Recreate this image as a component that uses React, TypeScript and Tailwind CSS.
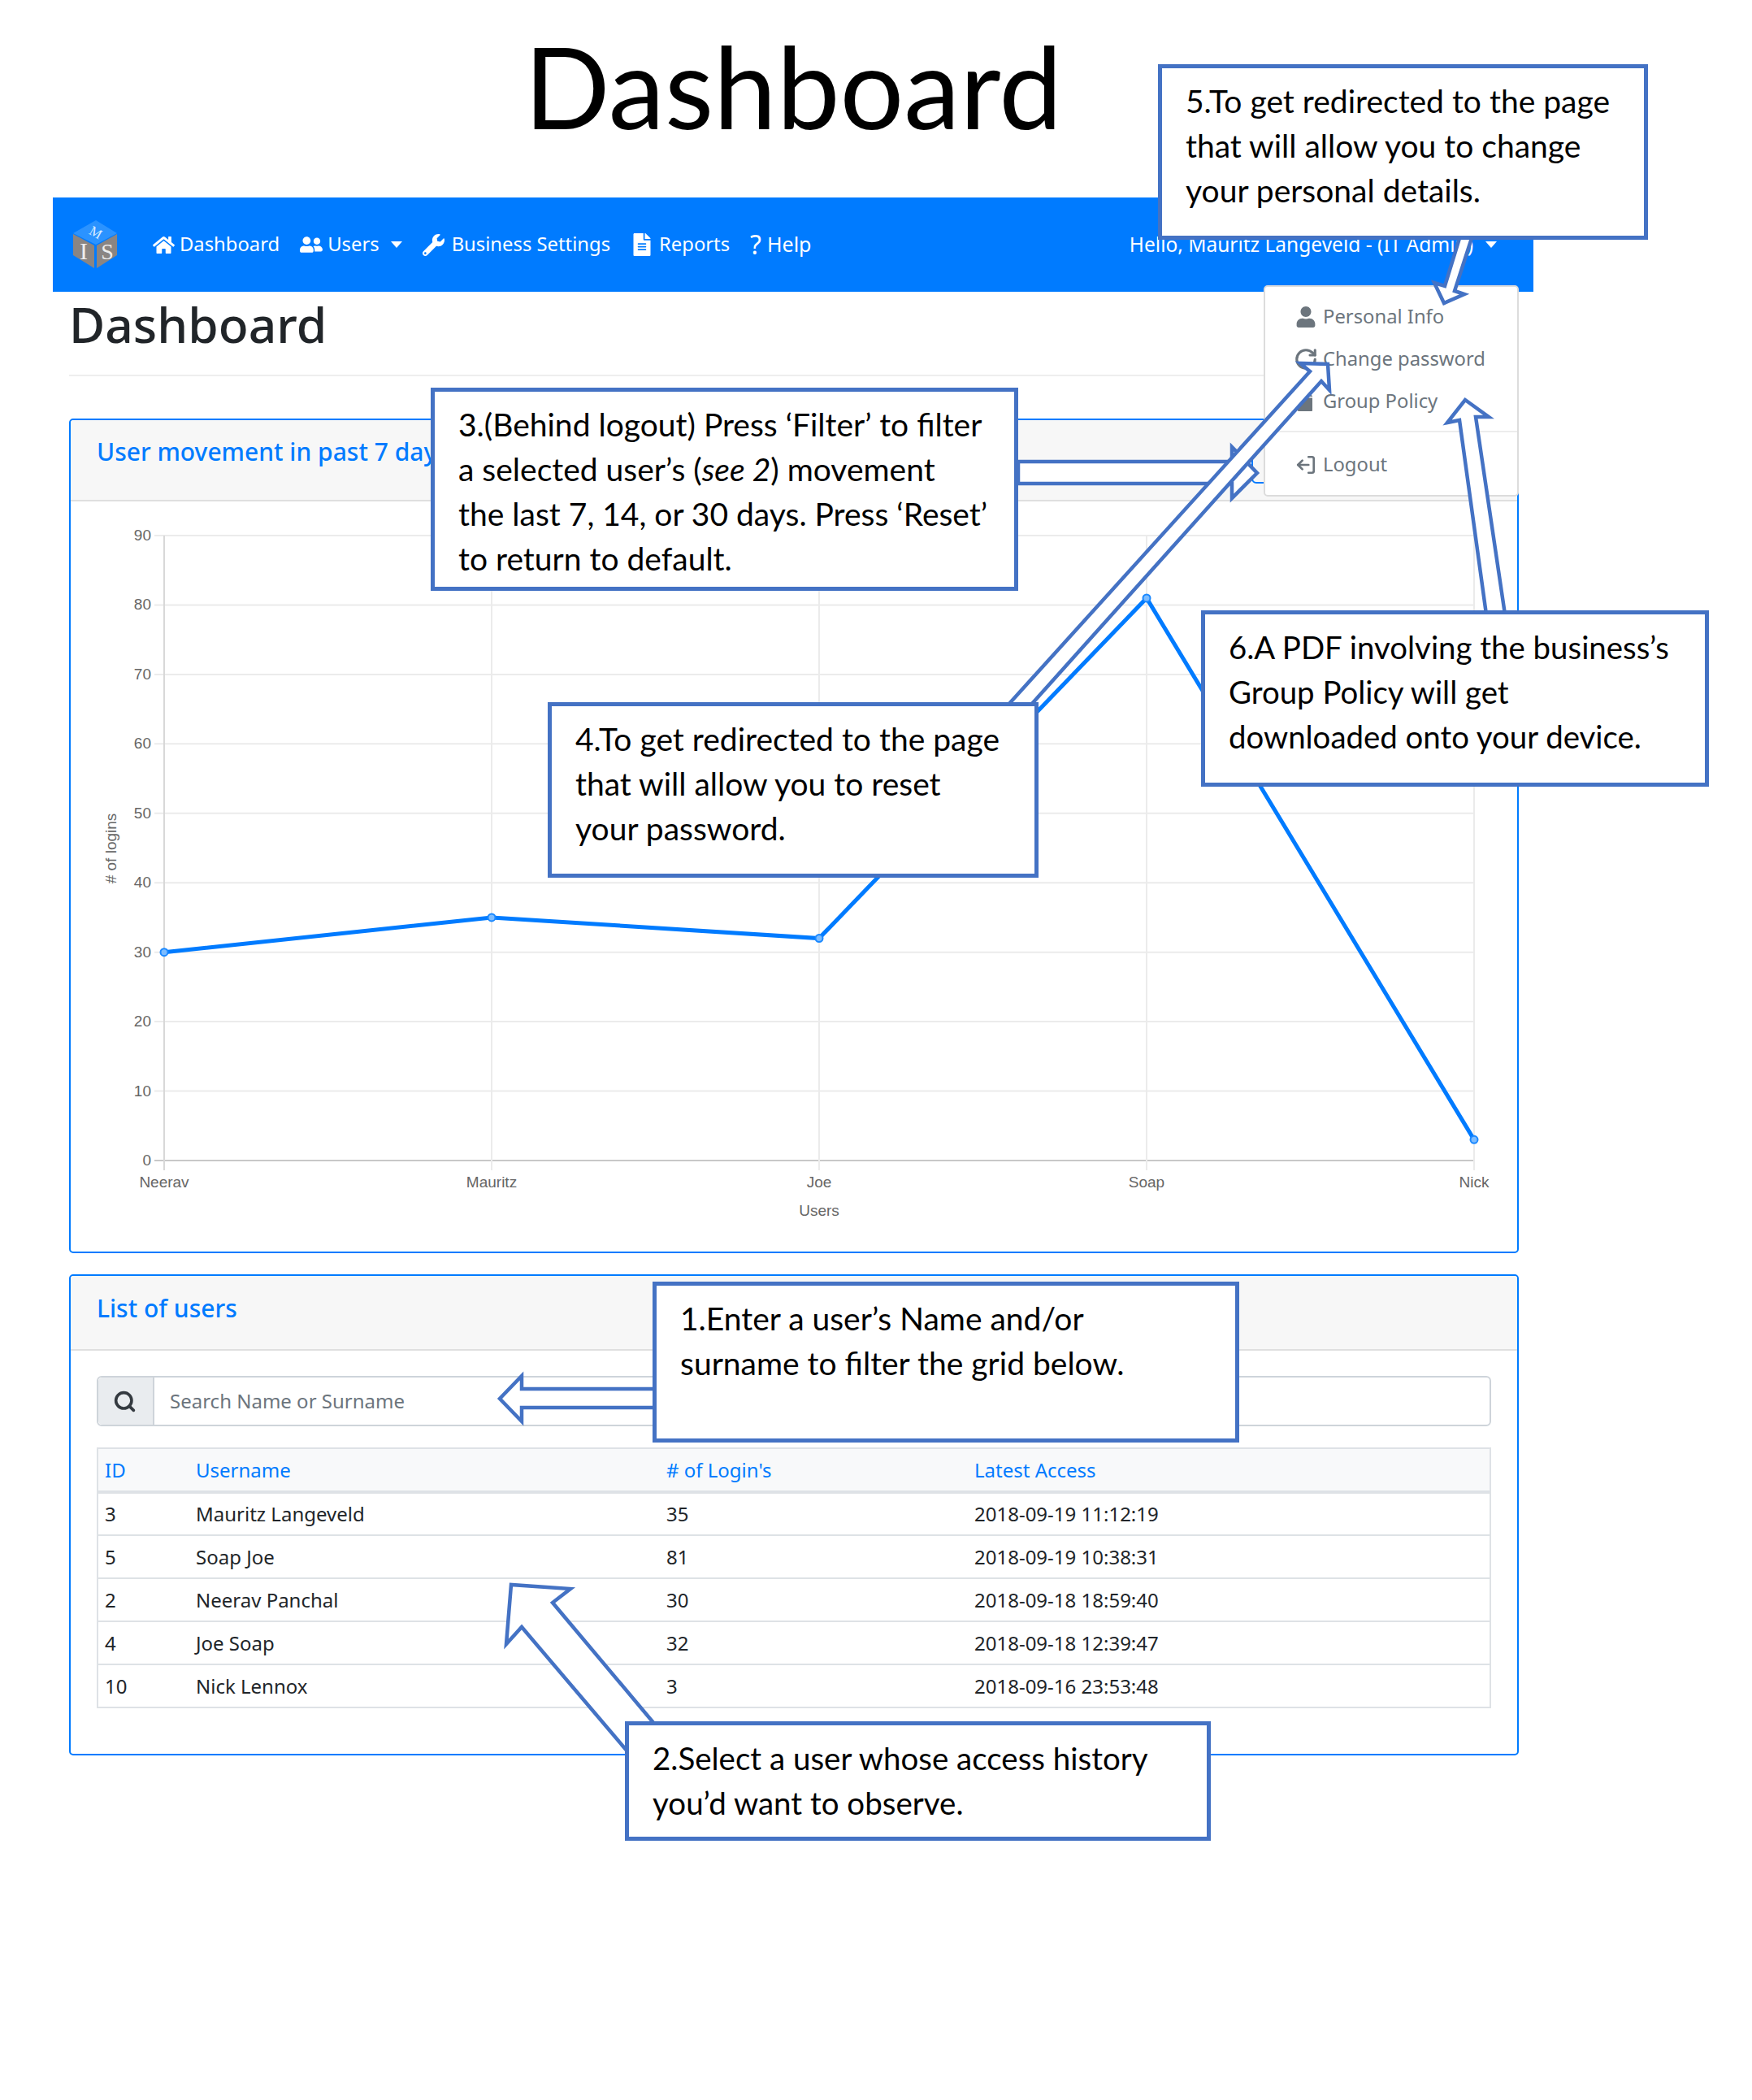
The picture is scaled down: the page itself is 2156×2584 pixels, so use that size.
import { RotateCw, LogOut, Search } from "lucide-react";
import { FaHome, FaUserFriends, FaWrench, FaFileAlt, FaUser, FaFile } from "react-icons/fa";

const xs = [201, 604, 1007, 1410, 1813];
const names = ["Neerav", "Mauritz", "Joe", "Soap", "Nick"];
const logins = [30, 35, 32, 81, 3];
const yOf = (v: number) => 1428 - v * 8.544;

const users = [
  ["3", "Mauritz Langeveld", "35", "2018-09-19 11:12:19"],
  ["5", "Soap Joe", "81", "2018-09-19 10:38:31"],
  ["2", "Neerav Panchal", "30", "2018-09-18 18:59:40"],
  ["4", "Joe Soap", "32", "2018-09-18 12:39:47"],
  ["10", "Nick Lennox", "3", "2018-09-16 23:53:48"],
];

const Logo = () => (
  <svg width="56" height="62" viewBox="88 271 56 62" className="shrink-0">
    <polygon points="117,272 143,288 117,302 89,288" fill="#2b93ff" />
    <polygon points="89,289 115,303 115,331 89,315" fill="#8a8583" />
    <polygon points="143,289 118,303 118,331 143,315" fill="#8a8583" />
    <text textAnchor="middle" fontSize="17" fill="#d8ecff" fontFamily="Liberation Serif, serif" transform="translate(114 292) rotate(30)">M</text>
    <text x="102" y="320" textAnchor="middle" fontSize="30" fill="#eeeeee" fontFamily="Liberation Serif, serif">I</text>
    <text x="131" y="320" textAnchor="middle" fontSize="28" fill="#eeeeee" fontFamily="Liberation Serif, serif">S</text>
  </svg>
);

const Caret = () => (
  <span className="block w-0 h-0 border-x-[7px] border-x-transparent border-t-[8px] border-t-white" />
);

const Navbar = () => (
  <nav className="h-[116px] bg-[#007bff] flex items-center pl-[24px] pr-[45px] text-white text-[23.8px]">
    <Logo />
    <div className="ml-[43px] flex items-center gap-[25px]">
      <a className="flex items-center gap-[6px]">
        <FaHome className="text-[27px]" />
        <span>Dashboard</span>
      </a>
      <a className="flex items-center gap-[6px]">
        <FaUserFriends className="text-[28px]" />
        <span>Users</span>
        <span className="ml-[8px]"><Caret /></span>
      </a>
      <a className="flex items-center gap-[9px]">
        <FaWrench className="text-[27px]" />
        <span>Business Settings</span>
      </a>
      <a className="flex items-center gap-[7px]">
        <FaFileAlt className="text-[28px]" />
        <span>Reports</span>
      </a>
      <a className="flex items-center gap-[7px]">
        <span className="text-[32px] leading-none">?</span>
        <span className="text-[25px]">Help</span>
      </a>
    </div>
    <div className="ml-auto flex items-center gap-[15px] text-[24.5px]">
      <span>Hello, Mauritz Langeveld - (IT Admin)</span>
      <Caret />
    </div>
  </nav>
);

const Chart = () => (
  <svg viewBox="86 617 1782 924" className="block w-[1782px] h-[924px]" fontFamily="Liberation Sans, sans-serif" fontSize="19" fill="#666666">
    {[0, 10, 20, 30, 40, 50, 60, 70, 80, 90].map((v) => (
      <g key={v}>
        <line x1="189" x2="1813" y1={yOf(v)} y2={yOf(v)} stroke={v === 0 ? "#c8c8c8" : "#ebebeb"} strokeWidth="2" />
        <text x="185" y={yOf(v) + 6} textAnchor="end">{v}</text>
      </g>
    ))}
    {xs.map((x, i) => (
      <g key={x}>
        <line x1={x} x2={x} y1="659" y2="1440" stroke={i === 0 ? "#d8d8d8" : "#ebebeb"} strokeWidth="2" />
        <text x={x} y="1461" textAnchor="middle">{names[i]}</text>
      </g>
    ))}
    <text x="1007" y="1496" textAnchor="middle">Users</text>
    <text transform="translate(142 1044) rotate(-90)" textAnchor="middle">{"# of logins"}</text>
    <polyline points={xs.map((x, i) => `${x},${yOf(logins[i])}`).join(" ")} fill="none" stroke="#007bff" strokeWidth="5" />
    {xs.map((x, i) => (
      <circle key={x} cx={x} cy={yOf(logins[i])} r="4.5" fill="#7cbcff" stroke="#1a88ff" strokeWidth="2" />
    ))}
  </svg>
);

const UsersCard = () => (
  <section className="mt-[26px] h-[592px] border-2 border-[#007bff] rounded-[5px]">
    <header className="h-[92px] bg-[#f7f7f7] border-b-2 border-[#dfdfdf] rounded-t-[4px] px-[32px] pt-[17px] text-[#007bff] text-[30px] font-medium">
      List of users
    </header>
    <div className="px-[32px] pt-[31px]">
      <div className="flex h-[62px] border-2 border-[#ced4da] rounded-[6px]">
        <span className="w-[69px] flex items-center justify-center bg-[#e9ecef] border-r-2 border-[#ced4da] text-[#343a40] rounded-l-[5px]">
          <Search size={29} strokeWidth={3} className="-ml-[2px]" />
        </span>
        <input
          className="flex-1 px-[19px] text-[24px] outline-none placeholder:text-[#6c757d]"
          placeholder="Search Name or Surname"
        />
      </div>
      <table className="mt-[26px] w-full table-fixed border-2 border-[#dee2e6] text-[24px] text-[#212529]">
        <thead className="bg-[#f8f9fa] text-[#007bff]">
          <tr className="h-[54px] border-b-4 border-[#dee2e6] text-left">
            <th className="w-[111px] pl-[8px] font-normal">ID</th>
            <th className="w-[579px] pl-[10px] font-normal">Username</th>
            <th className="w-[379px] pl-[10px] font-normal"># of Login's</th>
            <th className="pl-[10px] font-normal">Latest Access</th>
          </tr>
        </thead>
        <tbody>
          {users.map((u) => (
            <tr key={u[0]} className="h-[53px] border-b-2 border-[#dee2e6]">
              {u.map((cell, i) => (
                <td key={i} className={i === 0 ? "pl-[8px]" : "pl-[10px]"}>{cell}</td>
              ))}
            </tr>
          ))}
        </tbody>
      </table>
    </div>
  </section>
);

const DropdownMenu = () => (
  <div className="absolute left-[1555px] top-[351px] w-[314px] h-[260px] bg-white border-2 border-[#dcdcdc] rounded-[5px] text-[23.8px] text-[#6c757d]">
    <div className="h-[179px] border-b-2 border-[#ececec] pt-[11px]">
      <div className="h-[52px] flex items-center pl-[37px] gap-[8px]"><FaUser className="text-[26px] text-[#6c757d]" />Personal Info</div>
      <div className="h-[52px] flex items-center pl-[35px] gap-[6px]"><RotateCw size={30} strokeWidth={2.5} />Change password</div>
      <div className="h-[52px] flex items-center pl-[37px] gap-[10px]"><FaFile className="text-[24px]" />Group Policy</div>
    </div>
    <div className="h-[80px] flex items-center pl-[37px] gap-[8px]">
      <LogOut size={26} strokeWidth={2.5} className="-scale-x-100" />Logout
    </div>
  </div>
);

const arrows = [
  "1253,568 1516,568 1516,550 1547,582 1516,613 1516,595 1253,595",
  "1240,868 1612,457 1600,447 1634,448 1636,480 1626,469 1268,868",
  "1797,290 1778,352 1765,348 1777,373 1802,362 1790,358 1812,290",
  "1829,756 1796,517 1781,520 1803,492 1832,513 1816,513 1852,756",
  "806,1709 642,1709 642,1693 615,1721 642,1749 642,1732 806,1732",
  "806,2122 680,1972 702,1955 629,1950 623,2023 642,2002 772,2155",
];

const callouts = [
  { id: "5", box: "left-[1425px] top-[79px] w-[603px] h-[216px] text-[39px]", lines: ["5.To get redirected to the page", "that will allow you to change", "your personal details."] },
  { id: "3", box: "left-[530px] top-[477px] w-[723px] h-[250px] text-[39px]", lines: ["3.(Behind logout) Press ‘Filter’ to filter", <>a selected user’s (<em>see 2</em>) movement</>, "the last 7, 14, or 30 days. Press ‘Reset’", "to return to default."] },
  { id: "4", box: "left-[674px] top-[864px] w-[604px] h-[216px] text-[39px]", lines: ["4.To get redirected to the page", "that will allow you to reset", "your password."] },
  { id: "6", box: "left-[1478px] top-[751px] w-[625px] h-[217px] text-[38.4px]", lines: ["6.A PDF involving the business’s", "Group Policy will get", "downloaded onto your device."] },
  { id: "1", box: "left-[803px] top-[1577px] w-[722px] h-[198px] text-[39px]", lines: ["1.Enter a user’s Name and/or", "surname to filter the grid below."] },
  { id: "2", box: "left-[769px] top-[2118px] w-[721px] h-[147px] text-[38.5px]", lines: ["2.Select a user whose access history", "you’d want to observe."] },
];

export default function App() {
  return (
    <div className="relative w-[2156px] h-[2584px] bg-white overflow-hidden font-['Noto_Sans',sans-serif]">
      <div className="ml-[65px] w-[1822px]">
        <h1 className="h-[243px] pt-[21px] text-center text-[139px] leading-[170px] text-black font-['Lato',sans-serif]">Dashboard</h1>
        <Navbar />
        <div className="pl-[20px] pr-[18px]">
          <div className="h-[104px] border-b-2 border-[#eeeeee] text-[60.5px] leading-[80px] font-medium text-[#212529]">Dashboard</div>
          <section className="mt-[52px] h-[1027px] border-2 border-[#007bff] rounded-[5px]">
            <header className="h-[100px] bg-[#f7f7f7] border-b-2 border-[#dfdfdf] rounded-t-[4px] px-[32px] pt-[16px] flex justify-between text-[#007bff] text-[30px] font-medium">
              <span>User movement in past 7 days</span>
              <span className="mt-[4px] w-[295px] h-[58px] border-2 border-[#007bff] rounded-[6px]" />
            </header>
            <Chart />
          </section>
          <UsersCard />
        </div>
      </div>

      <DropdownMenu />

      <svg className="absolute inset-0" width="2156" height="2584" viewBox="0 0 2156 2584">
        {arrows.map((points) => (
          <polygon key={points} points={points} fill="white" stroke="#4472c4" strokeWidth="4.5" />
        ))}
      </svg>

      {callouts.map((c) => (
        <div key={c.id} className={`absolute ${c.box} bg-white border-[5px] border-[#4472c4] pl-[29px] pt-[13px] leading-[55px] text-black font-['Lato',sans-serif] whitespace-nowrap`}>
          {c.lines.map((line, i) => (
            <div key={i}>{line}</div>
          ))}
        </div>
      ))}
    </div>
  );
}
